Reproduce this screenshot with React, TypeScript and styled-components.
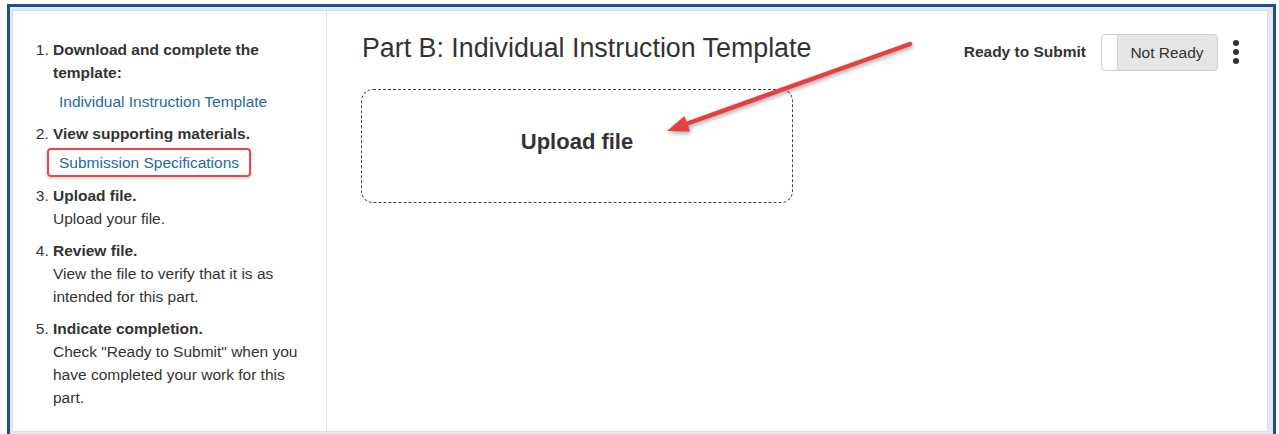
import React, { FC } from "react";
import styled, { createGlobalStyle } from "styled-components";

const GlobalStyle = createGlobalStyle`
  html, body {
    margin: 0;
    padding: 0;
    background: #fff;
  }
  body {
    font-family: "Liberation Sans", Arial, sans-serif;
    color: #333;
  }
`;

type Step = {
  title: string[];
  link?: string;
  boxed?: boolean;
  text?: string[];
};

const steps: Step[] = [
  {
    title: ["Download and complete the", "template:"],
    link: "Individual Instruction Template",
  },
  {
    title: ["View supporting materials."],
    link: "Submission Specifications",
    boxed: true,
  },
  { title: ["Upload file."], text: ["Upload your file."] },
  {
    title: ["Review file."],
    text: ["View the file to verify that it is as", "intended for this part."],
  },
  {
    title: ["Indicate completion."],
    text: [
      'Check "Ready to Submit" when you',
      "have completed your work for this",
      "part.",
    ],
  },
];

const Lines: FC<{ lines: string[] }> = ({ lines }) => (
  <>
    {lines.map((t, j) => (
      <span key={j}>
        {t}
        {j < lines.length - 1 && <br />}
      </span>
    ))}
  </>
);

const App: FC = () => {
  return (
    <>
      <GlobalStyle />
      <Page>
        <Frame>
          <Panel>
            <Sidebar>
              <StepList>
                {steps.map((s, i) => (
                  <StepItem key={i}>
                    <StepTitle>
                      <Lines lines={s.title} />
                    </StepTitle>
                    {s.link && (
                      <LinkLine $boxed={!!s.boxed}>
                        <DocLink href="#">{s.link}</DocLink>
                      </LinkLine>
                    )}
                    {s.text && (
                      <StepText>
                        <Lines lines={s.text} />
                      </StepText>
                    )}
                  </StepItem>
                ))}
              </StepList>
            </Sidebar>
            <Main>
              <TopRow>
                <Heading>Part B: Individual Instruction Template</Heading>
                <StatusGroup>
                  <StatusLabel>Ready to Submit</StatusLabel>
                  <Toggle>
                    <Knob />
                    <ToggleText>Not Ready</ToggleText>
                  </Toggle>
                  <Kebab>
                    <Dot />
                    <Dot />
                    <Dot />
                  </Kebab>
                </StatusGroup>
              </TopRow>
              <DropZone>Upload file</DropZone>
            </Main>
          </Panel>
        </Frame>
        <Callout viewBox="0 0 1279 434" width={1279} height={434}>
          <line
            x1={686}
            y1={124}
            x2={910}
            y2={44}
            stroke="#e8403f"
            strokeWidth={4.5}
            strokeLinecap="round"
          />
          <polygon points="667,131 690,131.5 684.5,116" fill="#e8403f" />
        </Callout>
      </Page>
    </>
  );
};

export default App;

const Page = styled.div`
  position: relative;
  width: 1279px;
  height: 434px;
  overflow: hidden;
  background: #fff;
`;

const Frame = styled.div`
  margin: 4px 3px 0 7px;
  height: 430px;
  box-sizing: border-box;
  border: 3px solid #1e4f8f;
  border-bottom: none;
  background: #e1e9f4;
  padding: 3px 5px 0 2px;
`;

const Panel = styled.div`
  display: flex;
  height: 422px;
  box-sizing: border-box;
  background: #fff;
  border: 1px solid #d8dde3;
`;

const Sidebar = styled.div`
  width: 314px;
  flex: none;
  border-right: 1px solid #e4e4e4;
  padding-top: 27px;
  box-sizing: border-box;
`;

const StepList = styled.ol`
  margin: 0;
  padding: 0 0 0 40px;
  font-size: 15.5px;
  line-height: 23px;
  color: #333;
`;

const StepItem = styled.li`
  margin-bottom: 9px;
`;

const StepTitle = styled.div`
  font-weight: 700;
`;

const StepText = styled.div`
  font-weight: 400;
`;

const LinkLine = styled.div<{ $boxed: boolean }>`
  ${({ $boxed }) =>
    $boxed
      ? `
    display: inline-block;
    margin: 3px 0 -2px -6px;
    padding: 1px 10px 1px 10px;
    border: 2px solid #e4474c;
    border-radius: 4px;
    box-shadow: 0 1px 3px rgba(0, 0, 0, 0.25);
  `
      : `
    margin-top: 6px;
    padding-left: 6px;
  `}
`;

const DocLink = styled.a`
  color: #246aa3;
  text-decoration: none;
  font-weight: 400;
`;

const Main = styled.div`
  flex: 1;
  padding: 21px 28px 0 34px;
  box-sizing: border-box;
`;

const TopRow = styled.div`
  display: flex;
  justify-content: space-between;
  align-items: center;
  height: 40px;
`;

const Heading = styled.h2`
  align-self: flex-start;
  margin: 0 0 0 1px;
  font-size: 26.8px;
  line-height: 32px;
  font-weight: 400;
  color: #333;
`;

const StatusGroup = styled.div`
  display: flex;
  align-items: center;
`;

const StatusLabel = styled.span`
  font-size: 15.5px;
  font-weight: 700;
  color: #333;
  margin-right: 15px;
`;

const Toggle = styled.div`
  display: flex;
  width: 117px;
  height: 37px;
  box-sizing: border-box;
  border: 1px solid #cfcfcf;
  border-radius: 4px;
  background: #e6e6e6;
  overflow: hidden;
`;

const Knob = styled.div`
  width: 15px;
  background: #fff;
  border-radius: 3px;
  box-shadow: 1px 0 1px rgba(0, 0, 0, 0.08);
`;

const ToggleText = styled.span`
  flex: 1;
  text-align: center;
  font-size: 15.5px;
  line-height: 35px;
  color: #333;
`;

const Kebab = styled.div`
  display: flex;
  flex-direction: column;
  gap: 3px;
  margin-left: 15px;
  padding: 2px 0;
`;

const Dot = styled.span`
  display: block;
  width: 6px;
  height: 6px;
  border-radius: 50%;
  background: #333;
`;

const DropZone = styled.div`
  margin-top: 17px;
  width: 432px;
  height: 114px;
  box-sizing: border-box;
  border: 1px dashed #444;
  border-radius: 12px;
  display: flex;
  align-items: center;
  justify-content: center;
  padding-bottom: 8px;
  font-size: 22px;
  font-weight: 700;
  color: #333;
`;

// red annotation arrow laid over the panel
const Callout = styled.svg`
  position: absolute;
  top: 0;
  left: 0;
  pointer-events: none;
  filter: drop-shadow(1px 2px 2px rgba(0, 0, 0, 0.35));
`;
